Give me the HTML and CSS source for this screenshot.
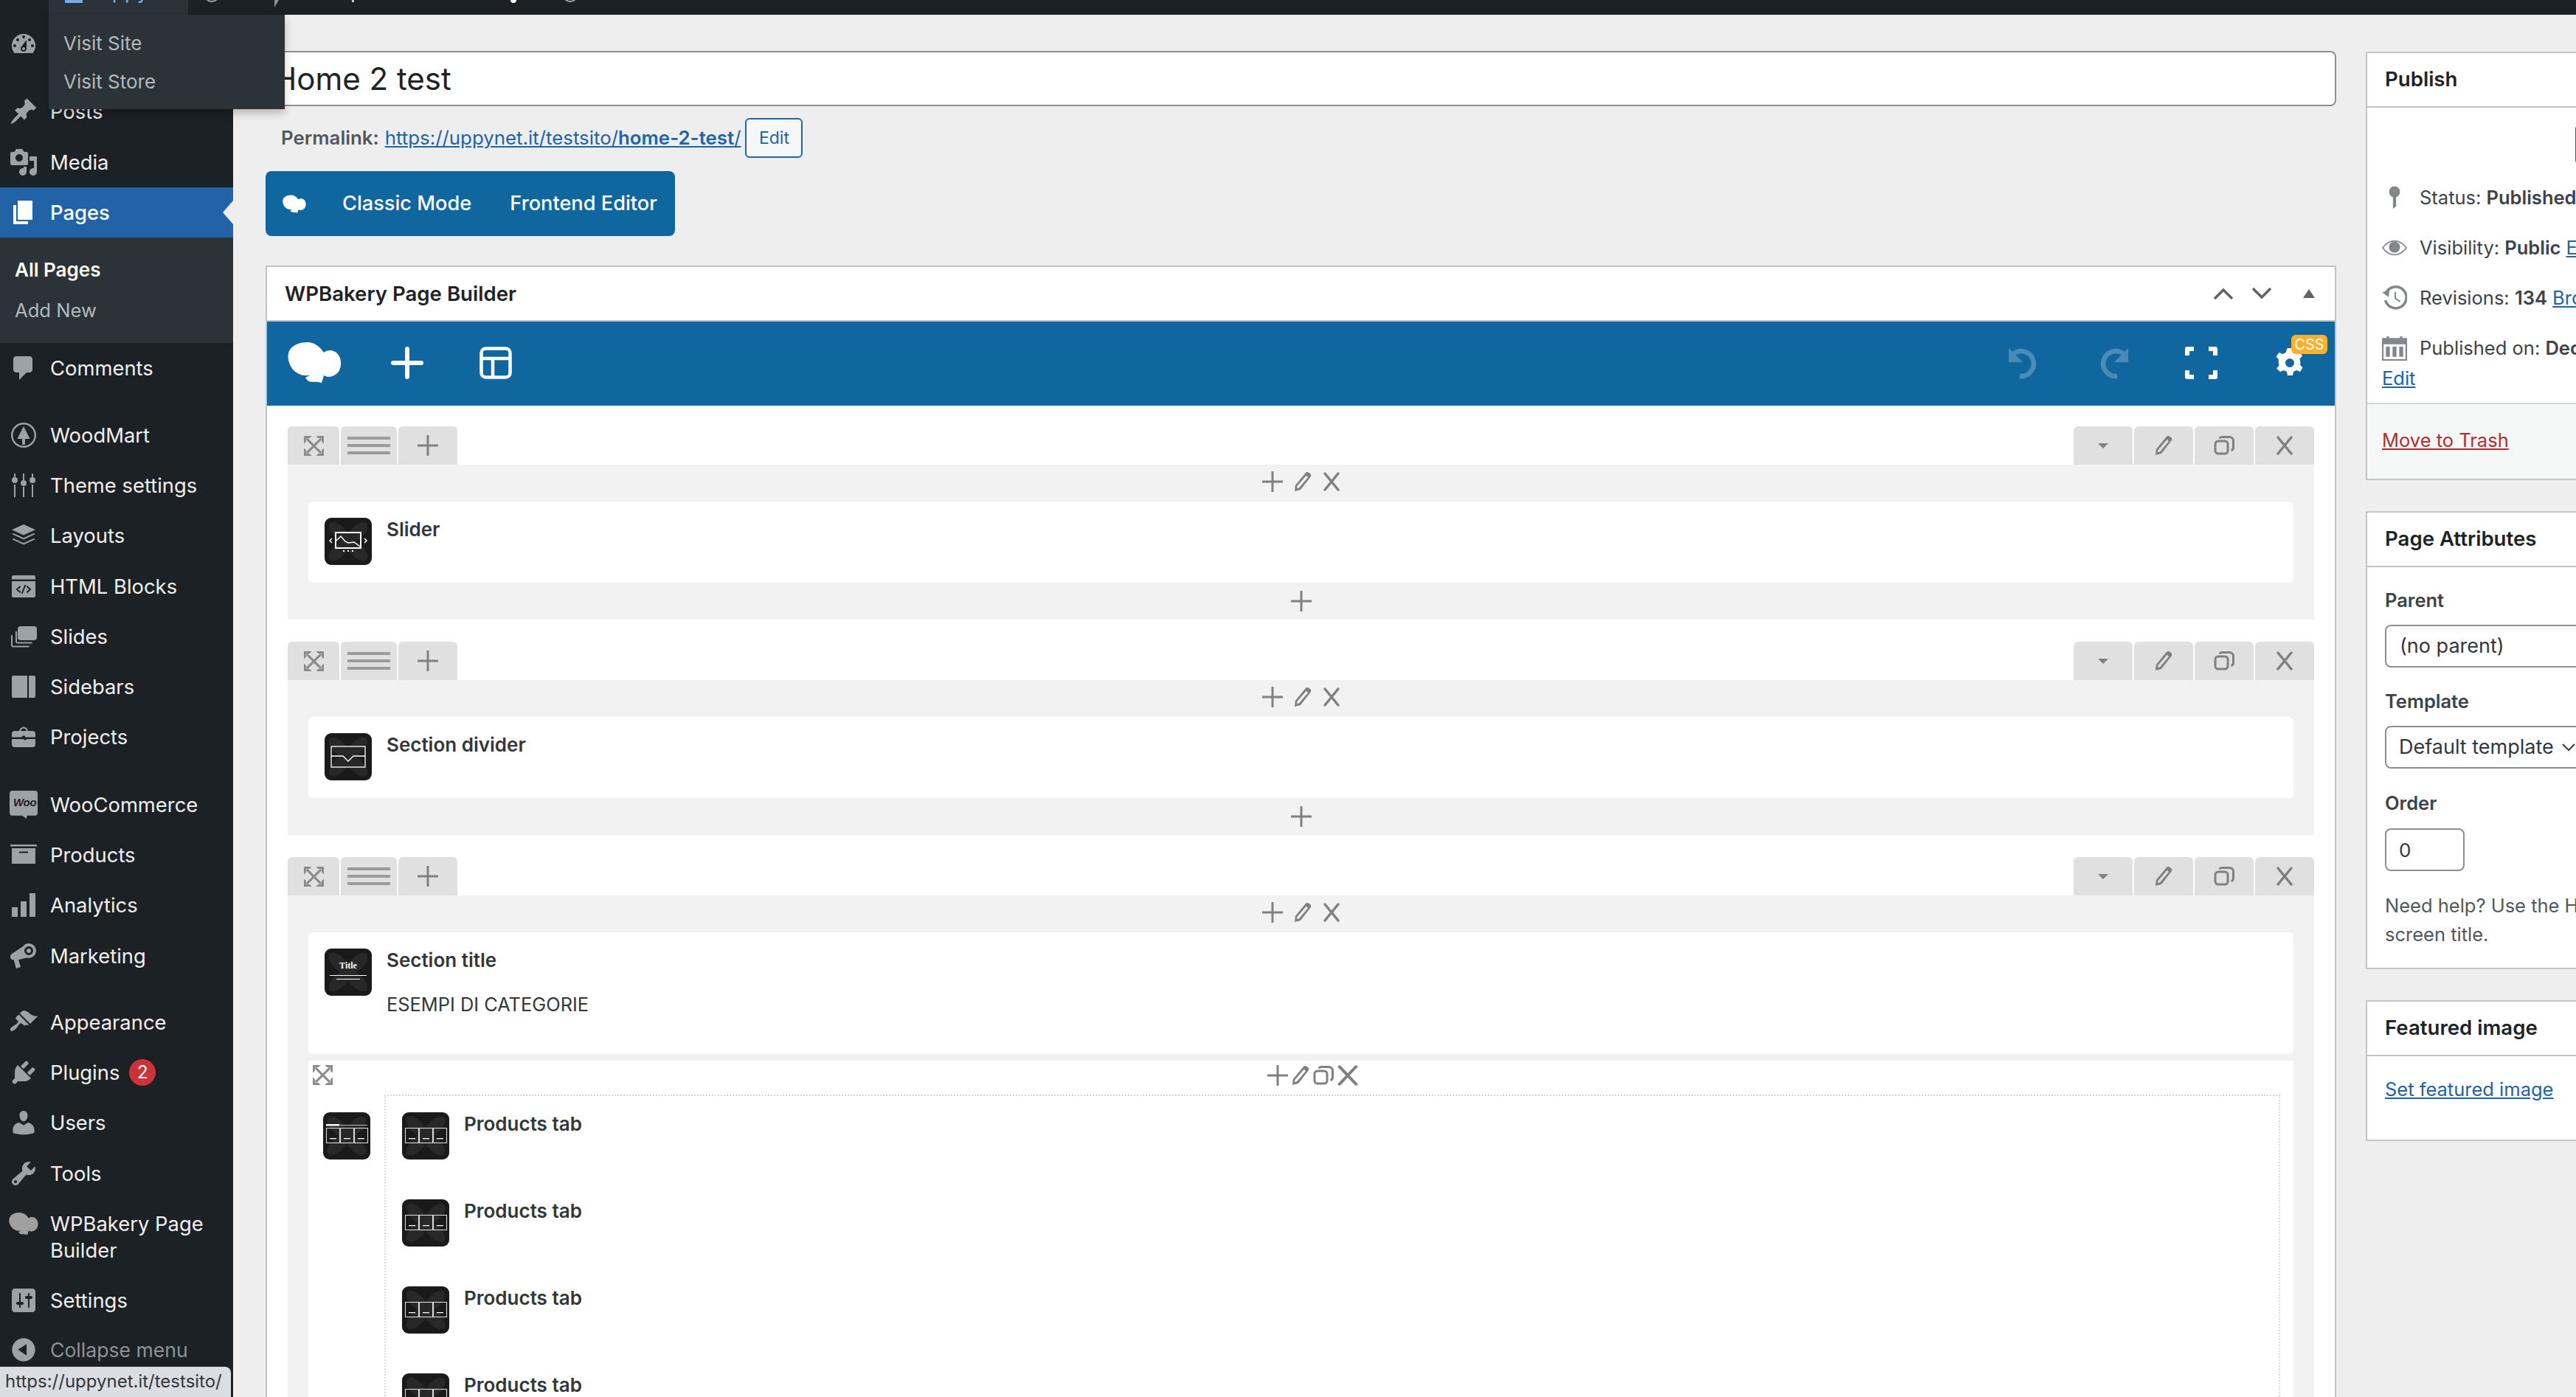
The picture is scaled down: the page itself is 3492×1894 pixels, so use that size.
FILE: index.html
```html
<!DOCTYPE html>
<html lang="en">
<head>
<meta charset="utf-8">
<title>Edit Page</title>
<link rel="stylesheet" href="styles.css">
</head>
<body>
<svg class="defs" aria-hidden="true">
  <symbol id="i-dashboard" viewBox="0 0 20 20"><path fill-rule="evenodd" d="M3.76 16h12.48c1.1-1.37 1.76-3.11 1.76-5 0-4.42-3.58-8-8-8s-8 3.58-8 8c0 1.89.66 3.63 1.76 5zM10 4c.55 0 1 .45 1 1s-.45 1-1 1-1-.45-1-1 .45-1 1-1zM6 6c.55 0 1 .45 1 1s-.45 1-1 1-1-.45-1-1 .45-1 1-1zm8 0c.55 0 1 .45 1 1s-.45 1-1 1-1-.45-1-1 .45-1 1-1zm-5.37 5.55L12 7v6c0 1.1-.9 2-2 2s-2-.9-2-2c0-.57.24-1.08.63-1.45zM4 10c.55 0 1 .45 1 1s-.45 1-1 1-1-.45-1-1 .45-1 1-1zm12 0c.55 0 1 .45 1 1s-.45 1-1 1-1-.45-1-1 .45-1 1-1zm-5 3c0-.55-.45-1-1-1s-1 .45-1 1 .45 1 1 1 1-.45 1-1z"/></symbol>
  <symbol id="i-post" viewBox="0 0 20 20"><path d="M10.44 3.02l1.82-1.82 6.36 6.35-1.83 1.82c-1.05-.68-2.48-.57-3.41.36l-.75.75c-.92.93-1.04 2.35-.35 3.41l-1.83 1.82-2.41-2.41-2.8 2.79c-.42.42-3.38 2.71-3.8 2.29s1.86-3.39 2.28-3.81l2.79-2.79L4.1 9.36l1.83-1.82c1.05.69 2.48.57 3.4-.36l.75-.75c.93-.92 1.05-2.35.36-3.41z"/></symbol>
  <symbol id="i-media" viewBox="0 0 20 20"><path fill-rule="evenodd" d="M13 11V4c0-.55-.45-1-1-1h-1.67L9 1H5L3.67 3H2c-.55 0-1 .45-1 1v7c0 .55.45 1 1 1h10c.55 0 1-.45 1-1zM7 4.500c1.380 0 2.500 1.120 2.500 2.500S8.380 9.500 7 9.500 4.500 8.380 4.500 7 5.620 4.500 7 4.500zM14 6h5v10.500c0 1.380-1.120 2.500-2.500 2.500S14 17.880 14 16.500s1.120-2.500 2.500-2.500c.17 0 .34.02.5.05V9h-3V6zm-4 8.050V13h2v3.500c0 1.380-1.120 2.500-2.500 2.500S7 17.880 7 16.500 8.120 14 9.500 14c.17 0 .34.02.5.05z"/></symbol>
  <symbol id="i-page" viewBox="0 0 20 20"><path d="M6 15V2h10v13H6zm-1 1h8v2H3V5h2v11z"/></symbol>
  <symbol id="i-comments" viewBox="0 0 20 20"><path d="M5 2h9c1.100 0 2 .9 2 2v7c0 1.100-.9 2-2 2h-2l-5 5v-5H5c-1.100 0-2-.9-2-2V4c0-1.100.9-2 2-2z"/></symbol>
  <symbol id="i-wood" viewBox="0 0 20 20"><path fill-rule="evenodd" d="M10 1.500a8.500 8.500 0 1 1 0 17 8.500 8.500 0 0 1 0-17zm0 1.200a7.300 7.300 0 1 0 0 14.600 7.300 7.300 0 0 0 0-14.600z"/><path d="M10 4l4.300 8.500H11v4H9v-4H5.700z"/></symbol>
  <symbol id="i-sliders" viewBox="0 0 20 20"><path d="M3.500 9.500h1V18h-1zM3.500 2h1v3h-1zM9.500 11h1v7h-1zM9.500 2h1v4.500h-1zM15.500 9.500h1V18h-1zM15.500 2h1v3h-1z"/><circle cx="4" cy="6.500" r="2"/><circle cx="10" cy="8.500" r="2"/><circle cx="16" cy="6.500" r="2"/></symbol>
  <symbol id="i-layers" viewBox="0 0 20 20"><path d="M10 2.500l8 3.600-8 3.600-8-3.600z"/><path d="M2 9l1.200-.5L10 11.600l6.800-3.100L18 9l-8 3.700zM2 12.500l1.200-.5L10 15.100l6.800-3.100 1.200.5-8 3.700z"/></symbol>
  <symbol id="i-html" viewBox="0 0 20 20"><path fill-rule="evenodd" d="M3 2.500h14a1 1 0 0 1 1 1v1.800H2V3.500a1 1 0 0 1 1-1zM2 6.500h16V16.500a1 1 0 0 1-1 1H3a1 1 0 0 1-1-1zm5.500 3L4.800 12l2.700 2.500.7-.7L6.200 12l2-1.800zm5 0l-.7.7 2 1.800-2 1.800.7.7 2.700-2.500zM10.700 9l-2.400 6h1l2.400-6z"/></symbol>
  <symbol id="i-slides" viewBox="0 0 20 20"><rect x="6" y="3" width="13" height="9.500" rx="2"/><path d="M4.500 6.500h1v7.200h10.300v1H6a1.500 1.500 0 0 1-1.500-1.500zM1.500 9h1v7.200h11.300v1H3A1.500 1.500 0 0 1 1.500 15.700z"/></symbol>
  <symbol id="i-sidebars" viewBox="0 0 20 20"><path d="M3 2.500h9.500v15H3a1 1 0 0 1-1-1v-13a1 1 0 0 1 1-1zM13.500 2.500H17a1 1 0 0 1 1 1v13a1 1 0 0 1-1 1h-3.500z"/></symbol>
  <symbol id="i-projects" viewBox="0 0 20 20"><path fill-rule="evenodd" d="M2 8a2 2 0 0 1 2-2h3c.4-1.700 1.600-2.800 3-2.800S12.600 4.300 13 6h3a2 2 0 0 1 2 2v2.300h-6.800a1.200 1.200 0 0 0-2.400 0H2zm6.100-2h3.800c-.3-1-1-1.700-1.900-1.700S8.400 5 8.100 6z"/><path d="M2 11.500h7.900a1.200 1.200 0 0 0 2.200 0H18V15a2 2 0 0 1-2 2H4a2 2 0 0 1-2-2z"/></symbol>
  <symbol id="i-products" viewBox="0 0 20 20"><path fill-rule="evenodd" d="M1 3h18v1.300H1zM2 5.500h16V16H2zM7 7.800v1h6v-1z"/></symbol>
  <symbol id="i-analytics" viewBox="0 0 20 20"><path d="M2 11.500h4V18H2zM8 7.500h4V18H8zM14 2h4v16h-4z"/></symbol>
  <symbol id="i-marketing" viewBox="0 0 20 20"><path fill-rule="evenodd" d="M13.500 1.500a5 5 0 0 1 0 10c-.5 0-1 0-1.500-.2L6.500 12.600 8 17.500l-3 1-1.700-5.900C2 12.700 1 12 1 10.600c0-1.200.7-2 1.700-2.500l6.900-4.600a5 5 0 0 1 3.900-2zm0 2a3 3 0 1 0 0 6 3 3 0 0 0 0-6zm0 1.500a1.500 1.500 0 1 1 0 3 1.500 1.500 0 0 1 0-3z"/></symbol>
  <symbol id="i-appearance" viewBox="0 0 20 20"><path d="M14.480 11.060L7.410 3.990l1.500-1.500c.5-.56 2.300-.47 3.510.32 1.210.8 1.430 1.280 2.910 2.100 1.180.64 2.450 1.260 4.450.85zm-.71.71L6.700 4.700 4.930 6.470c-.39.39-.39 1.020 0 1.410l1.060 1.060c.39.39.39 1.030 0 1.420-.6.6-1.430 1.110-2.210 1.690-.35.26-.7.53-1.010.84C1.430 13.230.4 14.840 1.210 15.650c.8.8 2.420-.23 3.760-1.560.31-.31.58-.66.85-1.020.57-.78 1.080-1.610 1.690-2.210.39-.39 1.020-.39 1.410 0l1.060 1.060c.39.39 1.020.39 1.410 0z"/></symbol>
  <symbol id="i-plugins" viewBox="0 0 20 20"><path d="M13.110 4.360L9.870 7.600 8 5.730l3.240-3.240c.35-.34 1.050-.2 1.560.32.52.51.66 1.210.31 1.550zm-8 1.770l.91-1.120 9.010 9.010-1.190.84c-.71.71-2.630 1.160-3.820 1.160H6.140L4.900 17.260c-.59.59-1.540.59-2.120 0-.59-.58-.59-1.530 0-2.120l1.240-1.240v-3.880c0-1.130.4-3.190 1.090-3.890zm7.260 3.970l3.240-3.240c.34-.35 1.040-.21 1.550.31.52.51.66 1.210.31 1.550l-3.240 3.250z"/></symbol>
  <symbol id="i-users" viewBox="0 0 20 20"><path d="M10 9.250c-2.270 0-2.730-3.440-2.730-3.440C7 4.020 7.820 2 9.970 2c2.160 0 2.980 2.020 2.710 3.810 0 0-.41 3.440-2.680 3.440zm0 2.570L12.720 10c2.390 0 4.520 2.330 4.520 4.530v2.490s-3.650 1.130-7.240 1.130c-3.650 0-7.240-1.130-7.240-1.130v-2.490c0-2.250 1.940-4.480 4.470-4.480z"/></symbol>
  <symbol id="i-tools" viewBox="0 0 20 20"><path fill-rule="evenodd" d="M16.680 9.770c-1.340 1.340-3.300 1.670-4.950.99l-5.410 6.520c-.99.99-2.590.99-3.580 0s-.99-2.59 0-3.570l6.520-5.420c-.68-1.650-.35-3.610.99-4.950 1.280-1.280 3.120-1.620 4.720-1.060l-2.890 2.890 2.820 2.820 2.860-2.870c.53 1.580.18 3.390-1.080 4.650zM3.810 16.210c.4.390 1.040.39 1.430 0 .4-.4.4-1.040 0-1.430-.39-.4-1.030-.4-1.430 0-.39.39-.39 1.030 0 1.430z"/></symbol>
  <symbol id="i-settings" viewBox="0 0 20 20"><path fill-rule="evenodd" d="M18 16V4c0-1.100-.9-2-2-2H4c-1.100 0-2 .9-2 2v12c0 1.100.9 2 2 2h12c1.100 0 2-.9 2-2zM8 11h1c.55 0 1 .45 1 1s-.45 1-1 1H8v1.500c0 .28-.22.5-.5.5s-.5-.22-.5-.5V13H6c-.55 0-1-.45-1-1s.45-1 1-1h1V5.500c0-.28.22-.5.5-.5s.5.22.5.5V11zm5-2h-1c-.55 0-1-.45-1-1s.45-1 1-1h1V5.500c0-.28.22-.5.5-.5s.5.22.5.5V7h1c.55 0 1 .45 1 1s-.45 1-1 1h-1v5.500c0 .28-.22.5-.5.5s-.5-.22-.5-.5V9z"/></symbol>
  <symbol id="i-collapse" viewBox="0 0 20 20"><path fill-rule="evenodd" d="M10 2.160c4.330 0 7.840 3.510 7.840 7.840s-3.510 7.840-7.840 7.840S2.160 14.330 2.160 10 5.710 2.160 10 2.160zm2 11.720V6.120L6.180 9.880z"/></symbol>
  <symbol id="i-woo" viewBox="0 0 40 36" preserveAspectRatio="none"><path d="M4 0h32a4 4 0 0 1 4 4v24a4 4 0 0 1-4 4H25l-1 4-6-4H4a4 4 0 0 1-4-4V4a4 4 0 0 1 4-4z"/></symbol>
  <symbol id="i-bakery" viewBox="0 0 73 55"><path d="M26 0C38 0 45 8 49 14 53 10 62 10 67 15c6 6 7 17 2 25-5 6-13 9-20 5l-3 10c-6-2-14 0-19-3l-3-4 7-4C26 46 16 46 8 38 1 30-2 18 3 10 8 3 17 0 26 0z"/></symbol>
  <symbol id="i-expand" viewBox="0 0 28 28"><g fill="none" stroke="currentColor" stroke-width="3"><path d="M4 4l20 20M24 4L4 24"/></g><path d="M0 0h11L8 3H3v5l-3 3zM28 0H17l3 3h5v5l3 3zM0 28h11l-3-3H3v-5l-3-3zM28 28H17l3-3h5v-5l3-3z"/></symbol>
  <symbol id="i-plus" viewBox="0 0 28 28"><path d="M12.500 0h3v12.500H28v3H15.500V28h-3V15.500H0v-3h12.500z"/></symbol>
  <symbol id="i-pencil" viewBox="0 0 26 26"><path fill-rule="evenodd" d="M18.500 0c1.500-.2 4 1.200 5 2.500 1 1.300 1 2.500.3 3.700L10 24l-8 2 .8-8L16.500 1.500c.5-.8 1.200-1.400 2-1.500zm-1 5L5.500 19l-.5 3 3-.8L20 7c-.5-.8-1.500-1.600-2.500-2z"/></symbol>
  <symbol id="i-copy" viewBox="0 0 28 26"><g fill="none" stroke="currentColor" stroke-width="3"><rect x="2" y="7" width="17" height="17" rx="4"/><path d="M8 3.500c.5-1.300 1.500-2 3-2h10c3 0 5.500 2 5.500 5v9c0 2-.8 3.500-3 4"/></g></symbol>
  <symbol id="i-close" viewBox="0 0 24 26" preserveAspectRatio="none"><path d="M3 2l18 22M21 2L3 24" fill="none" stroke="currentColor" stroke-width="3.500" stroke-linecap="round"/></symbol>
  <symbol id="el-bg" viewBox="0 0 64 64"><rect width="64" height="64" rx="9" fill="#1a1a1a"/><g fill="#282828"><ellipse cx="20" cy="20" rx="18" ry="9" transform="rotate(45 20 20)"/><ellipse cx="44" cy="20" rx="18" ry="9" transform="rotate(-45 44 20)"/><ellipse cx="20" cy="44" rx="18" ry="9" transform="rotate(-45 20 44)"/><ellipse cx="44" cy="44" rx="18" ry="9" transform="rotate(45 44 44)"/></g></symbol>
  <symbol id="gl-slider" viewBox="0 0 64 64"><g fill="none" stroke="#fff"><rect x="15" y="20" width="34" height="21" stroke-width="2"/><path d="M16 31l6-6 6 7 4 2 8-1 8 6" stroke-width="1.500"/><path d="M10 28l-3 3 3 3M54 28l3 3-3 3" stroke-width="1.500"/></g><path fill="#fff" d="M25 44h2v2h-2zM31 44h2v2h-2zM37 44h2v2h-2z"/></symbol>
  <symbol id="gl-divider" viewBox="0 0 64 64"><g fill="none" stroke="#fff" stroke-width="1.300"><rect x="9" y="18" width="46" height="28"/><path d="M9 31h16l7 7 7-7h16"/></g></symbol>
  <symbol id="gl-tabs" viewBox="0 0 64 64"><g fill="none" stroke="#d8d8d8" stroke-width="1.100"><rect x="4.500" y="21.500" width="18" height="20"/><rect x="23.500" y="21.500" width="18" height="20"/><rect x="42.500" y="21.500" width="18" height="20"/></g><path fill="#fff" d="M9 35h9v1.300H9zM28 35h9v1.300h-9zM47 35h9v1.300h-9z"/></symbol>
  <symbol id="gl-tabset" viewBox="0 0 64 64"><path fill="#fff" d="M4 16h18v2.500H4z"/><path fill="#bbb" d="M22 17h38v1H22z"/><g fill="none" stroke="#d8d8d8" stroke-width="1.100"><rect x="4.500" y="21.500" width="18" height="20"/><rect x="23.500" y="21.500" width="18" height="20"/><rect x="42.500" y="21.500" width="18" height="20"/></g><path fill="#fff" d="M9 35h9v1.300H9zM28 35h9v1.300h-9zM47 35h9v1.300h-9z"/></symbol>
</svg>

<header class="adminbar">
  <svg class="bar-wp"><use href="#i-wood"/></svg>
  <div class="bar-site">
    <span class="bar-home"></span>
    <span class="bar-name">Uppy</span>
  </div>
  <span class="bar-arc"></span>
  <span class="bar-wedge"></span>
  <span class="bar-stem"></span>
  <span class="bar-dot"></span>
  <span class="bar-arc bar-arc-last"></span>
</header>

<div class="flyout">
  <a class="flyout-link">Visit Site</a>
  <a class="flyout-link">Visit Store</a>
</div>

<div class="layout">
  <nav class="sidebar">
    <a class="menu-item" aria-label="Dashboard"><svg class="menu-ico"><use href="#i-dashboard"/></svg></a>
    <a class="menu-item sep"><svg class="menu-ico"><use href="#i-post"/></svg><span>Posts</span></a>
    <a class="menu-item"><svg class="menu-ico"><use href="#i-media"/></svg><span>Media</span></a>
    <a class="menu-item current"><svg class="menu-ico"><use href="#i-page"/></svg><span>Pages</span></a>
    <div class="submenu">
      <a class="sub-item sub-active">All Pages</a>
      <a class="sub-item">Add New</a>
    </div>
    <a class="menu-item"><svg class="menu-ico"><use href="#i-comments"/></svg><span>Comments</span></a>
    <a class="menu-item sep-s"><svg class="menu-ico"><use href="#i-wood"/></svg><span>WoodMart</span></a>
    <a class="menu-item"><svg class="menu-ico"><use href="#i-sliders"/></svg><span>Theme settings</span></a>
    <a class="menu-item"><svg class="menu-ico"><use href="#i-layers"/></svg><span>Layouts</span></a>
    <a class="menu-item"><svg class="menu-ico"><use href="#i-html"/></svg><span>HTML Blocks</span></a>
    <a class="menu-item"><svg class="menu-ico"><use href="#i-slides"/></svg><span>Slides</span></a>
    <a class="menu-item"><svg class="menu-ico"><use href="#i-sidebars"/></svg><span>Sidebars</span></a>
    <a class="menu-item"><svg class="menu-ico"><use href="#i-projects"/></svg><span>Projects</span></a>
    <a class="menu-item sep-m"><span class="woo-ico"><svg class="woo-bg"><use href="#i-woo"/></svg><span class="woo-text">Woo</span></span><span>WooCommerce</span></a>
    <a class="menu-item"><svg class="menu-ico"><use href="#i-products"/></svg><span>Products</span></a>
    <a class="menu-item"><svg class="menu-ico"><use href="#i-analytics"/></svg><span>Analytics</span></a>
    <a class="menu-item"><svg class="menu-ico"><use href="#i-marketing"/></svg><span>Marketing</span></a>
    <a class="menu-item sep-s"><svg class="menu-ico"><use href="#i-appearance"/></svg><span>Appearance</span></a>
    <a class="menu-item"><svg class="menu-ico"><use href="#i-plugins"/></svg><span>Plugins</span><span class="badge">2</span></a>
    <a class="menu-item"><svg class="menu-ico"><use href="#i-users"/></svg><span>Users</span></a>
    <a class="menu-item"><svg class="menu-ico"><use href="#i-tools"/></svg><span>Tools</span></a>
    <a class="menu-item tall"><svg class="menu-ico"><use href="#i-bakery"/></svg><span>WPBakery Page Builder</span></a>
    <a class="menu-item"><svg class="menu-ico"><use href="#i-settings"/></svg><span>Settings</span></a>
    <a class="menu-item collapse"><svg class="menu-ico"><use href="#i-collapse"/></svg><span>Collapse menu</span></a>
  </nav>

  <main class="content">
    <div class="main-col">
      <input class="title-input" type="text" value="Home 2 test">
      <div class="permalink">
        <strong class="perma-label">Permalink:</strong>
        <a class="link perma-link">https://uppynet.it/testsito/<strong>home-2-test</strong>/</a>
        <span class="edit-btn">Edit</span>
      </div>
      <div class="mode-bar">
        <svg class="mode-logo"><use href="#i-bakery"/></svg>
        <span class="mode-btn mode-classic">Classic Mode</span>
        <span class="mode-btn">Frontend Editor</span>
      </div>

      <section class="pb-box">
        <div class="pb-head">
          <h2 class="pb-title">WPBakery Page Builder</h2>
          <svg class="pb-chev" viewBox="0 0 28 16"><path d="M2 15l12-12 12 12" fill="none" stroke="#5f6368" stroke-width="3.500"/></svg>
          <svg class="pb-chev pb-chev-down" viewBox="0 0 28 16"><path d="M2 1l12 12 12-12" fill="none" stroke="#5f6368" stroke-width="3.500"/></svg>
          <span class="pb-tri"></span>
        </div>
        <div class="pb-toolbar">
          <svg class="tb-logo"><use href="#i-bakery"/></svg>
          <svg class="tb-plus" viewBox="0 0 44 44"><path d="M22 3v38M3 22h38" fill="none" stroke="#fff" stroke-width="6" stroke-linecap="round"/></svg>
          <svg class="tb-layout" viewBox="0 0 44 44"><g fill="none" stroke="#fff" stroke-width="4.500"><rect x="2.500" y="2.500" width="39" height="39" rx="6"/><path d="M2 16h40M18 16v26"/></g></svg>
          <span class="tb-spacer"></span>
          <svg class="tb-undo" viewBox="0 0 44 44"><g fill="none" stroke="#4a8cb8" stroke-width="6.500"><path d="M7 10a17 17 0 1 1 9 30"/></g><path fill="#4a8cb8" d="M1 2v19h19z"/></svg>
          <svg class="tb-redo" viewBox="0 0 44 44"><g fill="none" stroke="#4a8cb8" stroke-width="6.500"><path d="M37 10a17 17 0 1 0-9 30"/></g><path fill="#4a8cb8" d="M43 2v19H24z"/></svg>
          <svg class="tb-full" viewBox="0 0 44 44"><g fill="none" stroke="#fff" stroke-width="6" stroke-linejoin="round"><path d="M3 12V3h9M32 3h9v9M41 32v9h-9M12 41H3v-9"/></g></svg>
          <span class="tb-gear-wrap">
            <svg class="tb-gear" viewBox="0 0 40 40"><path fill="#fff" fill-rule="evenodd" d="M16.500 0h7l1 5 4 2 5-2 3.500 5.500-3.500 4 .5 2.500.5 3-.5 2.500 3.500 4-3.500 5.500-5-2-4 2-1 5h-7l-1-5-4-2-5 2L2 27.500l3.500-4-.5-2.500-.5-3 .5-2.500-3.500-4L5.500 6l5 2 4-2zM20 14a6 6 0 1 0 0 12 6 6 0 0 0 0-12z"/></svg>
            <span class="css-badge">CSS</span>
          </span>
        </div>

        <div class="pb-rows">
          <section class="row">
            <div class="row-bar">
              <div class="tabs">
                <span class="tab tab-exp"><svg class="ic-exp"><use href="#i-expand"/></svg></span>
                <span class="tab tab-burger"><span class="burger"></span></span>
                <span class="tab tab-add"><svg class="ic-add"><use href="#i-plus"/></svg></span>
              </div>
              <div class="tabs">
                <span class="tab tab-r"><span class="mini-tri"></span></span>
                <span class="tab tab-r"><svg class="ic-edit"><use href="#i-pencil"/></svg></span>
                <span class="tab tab-r"><svg class="ic-copy"><use href="#i-copy"/></svg></span>
                <span class="tab tab-r"><svg class="ic-x"><use href="#i-close"/></svg></span>
              </div>
            </div>
            <div class="row-body">
              <div class="controls"><svg class="ic-add"><use href="#i-plus"/></svg><svg class="ic-edit"><use href="#i-pencil"/></svg><svg class="ic-x"><use href="#i-close"/></svg></div>
              <div class="element">
                <svg class="el-icon"><use href="#el-bg"/><use href="#gl-slider"/></svg>
                <div class="el-text"><div class="el-name">Slider</div></div>
              </div>
              <div class="row-foot"><svg class="ic-add"><use href="#i-plus"/></svg></div>
            </div>
          </section>

          <section class="row">
            <div class="row-bar">
              <div class="tabs">
                <span class="tab tab-exp"><svg class="ic-exp"><use href="#i-expand"/></svg></span>
                <span class="tab tab-burger"><span class="burger"></span></span>
                <span class="tab tab-add"><svg class="ic-add"><use href="#i-plus"/></svg></span>
              </div>
              <div class="tabs">
                <span class="tab tab-r"><span class="mini-tri"></span></span>
                <span class="tab tab-r"><svg class="ic-edit"><use href="#i-pencil"/></svg></span>
                <span class="tab tab-r"><svg class="ic-copy"><use href="#i-copy"/></svg></span>
                <span class="tab tab-r"><svg class="ic-x"><use href="#i-close"/></svg></span>
              </div>
            </div>
            <div class="row-body">
              <div class="controls"><svg class="ic-add"><use href="#i-plus"/></svg><svg class="ic-edit"><use href="#i-pencil"/></svg><svg class="ic-x"><use href="#i-close"/></svg></div>
              <div class="element">
                <svg class="el-icon"><use href="#el-bg"/><use href="#gl-divider"/></svg>
                <div class="el-text"><div class="el-name">Section divider</div></div>
              </div>
              <div class="row-foot"><svg class="ic-add"><use href="#i-plus"/></svg></div>
            </div>
          </section>

          <section class="row">
            <div class="row-bar">
              <div class="tabs">
                <span class="tab tab-exp"><svg class="ic-exp"><use href="#i-expand"/></svg></span>
                <span class="tab tab-burger"><span class="burger"></span></span>
                <span class="tab tab-add"><svg class="ic-add"><use href="#i-plus"/></svg></span>
              </div>
              <div class="tabs">
                <span class="tab tab-r"><span class="mini-tri"></span></span>
                <span class="tab tab-r"><svg class="ic-edit"><use href="#i-pencil"/></svg></span>
                <span class="tab tab-r"><svg class="ic-copy"><use href="#i-copy"/></svg></span>
                <span class="tab tab-r"><svg class="ic-x"><use href="#i-close"/></svg></span>
              </div>
            </div>
            <div class="row-body">
              <div class="controls"><svg class="ic-add"><use href="#i-plus"/></svg><svg class="ic-edit"><use href="#i-pencil"/></svg><svg class="ic-x"><use href="#i-close"/></svg></div>
              <div class="element">
                <svg class="el-icon" viewBox="0 0 64 64"><use href="#el-bg"/><text class="el-glyph-text" x="32" y="27" text-anchor="middle">Title</text><path fill="#fff" d="M7 36h50v1H7zM16 41h32v1H16z"/></svg>
                <div class="el-text"><div class="el-name">Section title</div><div class="el-desc">ESEMPI DI CATEGORIE</div></div>
              </div>
              <div class="tabs-el">
                <div class="tabs-el-head">
                  <svg class="ic-exp"><use href="#i-expand"/></svg>
                  <div class="controls controls-in"><svg class="ic-add"><use href="#i-plus"/></svg><svg class="ic-edit"><use href="#i-pencil"/></svg><svg class="ic-copy"><use href="#i-copy"/></svg><svg class="ic-x"><use href="#i-close"/></svg></div>
                </div>
                <div class="tabs-el-body">
                  <svg class="el-icon tabs-el-icon"><use href="#el-bg"/><use href="#gl-tabset"/></svg>
                  <div class="tabs-list">
                    <div class="tab-item"><svg class="el-icon"><use href="#el-bg"/><use href="#gl-tabs"/></svg><div class="el-name">Products tab</div></div>
                    <div class="tab-item"><svg class="el-icon"><use href="#el-bg"/><use href="#gl-tabs"/></svg><div class="el-name">Products tab</div></div>
                    <div class="tab-item"><svg class="el-icon"><use href="#el-bg"/><use href="#gl-tabs"/></svg><div class="el-name">Products tab</div></div>
                    <div class="tab-item"><svg class="el-icon"><use href="#el-bg"/><use href="#gl-tabs"/></svg><div class="el-name">Products tab</div></div>
                  </div>
                </div>
              </div>
            </div>
          </section>
        </div>
      </section>
    </div>

    <aside class="side-col">
      <section class="postbox">
        <h2 class="box-title">Publish</h2>
        <div class="pub-actions"><span class="preview-btn">Preview Changes</span></div>
        <div class="misc-item"><svg class="misc-ico" viewBox="0 0 32 32"><circle cx="16" cy="8.500" r="7"/><path d="M14 12h4v15l-4 3z"/></svg><span>Status: <b>Published</b> <a class="link">Edit</a></span></div>
        <div class="misc-item"><svg class="misc-ico misc-eye" viewBox="0 0 36 22"><path fill="none" stroke="#82878c" stroke-width="1.800" d="M1 11C6 4 12 1 18 1s12 3 17 10c-5 7-11 10-17 10S6 18 1 11z"/><circle cx="18" cy="10" r="8"/></svg><span>Visibility: <b>Public</b> <a class="link">Edit</a></span></div>
        <div class="misc-item"><svg class="misc-ico" viewBox="0 0 34 32"><path fill="none" stroke="#82878c" stroke-width="3.500" d="M6 8a14.500 14.500 0 1 1-1.500 11"/><path d="M0 8l10-2-1 9zM17 8h2v8l6 4-1 2-7-5z"/></svg><span>Revisions: <b>134</b> <a class="link">Browse</a></span></div>
        <div class="misc-item"><svg class="misc-ico" viewBox="0 0 32 32"><path fill-rule="evenodd" d="M0 3h6V1h3v2h14V1h3v2h6v29H0zM2 11v19h28V11zM5 14h5v13H5zM13.500 14h5v13h-5zM22 14h5v13h-5z"/></svg><span>Published on: <b>Dec 15, 2022 at 14:20</b></span></div>
        <a class="link misc-edit">Edit</a>
        <div class="box-foot"><a class="trash">Move to Trash</a></div>
      </section>

      <section class="postbox">
        <h2 class="box-title">Page Attributes</h2>
        <div class="attr-body">
          <div class="attr-label attr-first">Parent</div>
          <div class="select select-wide">(no parent)</div>
          <div class="attr-label">Template</div>
          <div class="select">Default template<svg class="select-chev" viewBox="0 0 20 12"><path d="M2 2l8 8 8-8" fill="none" stroke="#32373c" stroke-width="2"/></svg></div>
          <div class="attr-label attr-order">Order</div>
          <input class="order-input" type="text" value="0">
          <p class="attr-help">Need help? Use the Help tab above the screen title.</p>
        </div>
      </section>

      <section class="postbox">
        <h2 class="box-title">Featured image</h2>
        <div class="feat-body"><a class="link">Set featured image</a></div>
      </section>
    </aside>
  </main>
</div>

<div class="statusbar">https://uppynet.it/testsito/</div>
</body>
</html>
```
FILE: styles.css
```css
* { box-sizing: border-box; }
html, body { margin: 0; width: 3492px; height: 1894px; overflow: hidden; }
body {
  position: relative;
  background: #eeeeee;
  color: #32373c;
  font-family: Inter, "Liberation Sans", sans-serif;
  font-size: 25.5px;
  line-height: 36px;
}
.defs { position: absolute; width: 0; height: 0; }
a { text-decoration: none; }
b, strong { font-weight: 600; }
h2 { margin: 0; }

/* admin bar */
.adminbar { display: flex; height: 20px; background: #1c2125; overflow: hidden; }
.bar-wp { width: 40px; height: 40px; margin: -37px 0 0 10px; fill: #a0a5aa; flex: none; }
.bar-site { display: flex; width: 189px; margin-left: 16px; height: 20px; background: #2c3338; flex: none; }
.bar-home { width: 24px; height: 4px; margin-left: 22px; background: #72aee6; }
.bar-name { margin: -30px 0 0 19px; color: #72aee6; font-size: 28px; height: 36px; }
.bar-arc { width: 22px; height: 22px; margin: -19px 0 0 21px; border: 2px solid #a0a5aa; border-radius: 50%; flex: none; }
.bar-wedge { width: 6px; height: 10px; margin: 0 0 0 74px; background: #8a8f94; clip-path: polygon(0 0, 100% 0, 0 100%); flex: none; }
.bar-stem { width: 3px; height: 3px; margin-left: 99px; background: #c4c7ca; flex: none; }
.bar-dot { width: 8px; height: 8px; margin: -4px 0 0 212px; background: #fff; border-radius: 50%; flex: none; }
.bar-arc-last { margin-left: 62px; }

/* flyout over the menu */
.flyout {
  position: absolute; left: 66px; top: 20px; z-index: 5;
  width: 320px; height: 128px; padding-top: 13px;
  background: #2c3338;
  box-shadow: 0 6px 10px rgba(0, 0, 0, .22);
}
.flyout-link { display: block; height: 52px; padding-left: 20px; color: #b3b8bd; font-size: 26px; line-height: 52px; }

/* layout */
.layout { display: flex; height: 1874px; }
.sidebar { flex: none; width: 316px; padding-top: 6px; background: #1c2125; overflow: hidden; }
.menu-item { position: relative; display: flex; align-items: center; height: 68.3px; padding-left: 12px; color: #f0f0f1; font-size: 27.4px; line-height: 36px; }
.menu-ico { flex: none; width: 40px; height: 40px; margin-right: 16px; fill: #9ca2a7; }
.sep { margin-top: 23px; }
.sep-m { margin-top: 23px; }
.sep-s { margin-top: 22px; }
.tall { height: 104px; align-items: flex-start; padding-top: 16px; }
.tall .menu-ico { height: 36px; fill: #a0a0a0; }
.collapse { margin-top: -1px; color: #8d9297; font-size: 26.6px; }
.current { background: #2163a6; color: #fff; font-weight: 500; }
.current .menu-ico { fill: #fff; }
.current::after {
  content: ""; position: absolute; right: 0; top: 18px;
  border-style: solid; border-width: 16px 14px 16px 0;
  border-color: transparent #eeeeee transparent transparent;
}
.submenu { height: 143px; padding-top: 16px; background: #2c3338; }
.sub-item { display: block; height: 55px; padding-left: 20px; color: #b3b8bd; font-size: 25.6px; line-height: 55px; }
.sub-active { color: #fff; font-weight: 600; font-size: 26px; }
.badge { width: 36px; height: 36px; margin-left: 13px; border-radius: 18px; background: #cc3338; color: #fff; font-size: 24px; text-align: center; line-height: 36px; }
.woo-ico { position: relative; display: flex; align-items: center; justify-content: center; flex: none; width: 40px; height: 40px; margin-right: 16px; }
.woo-bg { width: 38px; height: 38px; fill: #9ca2a7; }
.woo-text { position: absolute; left: 6px; top: 4px; color: #1c2125; font: italic 700 15px/26px "Liberation Sans", sans-serif; letter-spacing: -.3px; }

.content { display: flex; flex: 1; min-width: 0; padding-left: 44px; }
.main-col { flex: none; width: 2807px; padding-top: 49px; }
.side-col { flex: none; width: 560px; margin-left: 40px; padding-top: 50px; }

/* title */
.title-input {
  display: block; width: 100%; height: 75px; padding: 0 0 0 9px;
  border: 2px solid #8c8f94; border-radius: 8px; background: #fff;
  color: #1d2327; font: 400 42px/1 Inter, "Liberation Sans", sans-serif;
}
.permalink { display: flex; align-items: center; height: 54px; margin-top: 16px; padding-left: 21px; font-size: 25.85px; line-height: 34px; }
.perma-label { color: #50575e; margin-right: 8px; }
.link { color: #2063a8; text-decoration: underline; }
.edit-btn {
  display: flex; align-items: center; justify-content: center;
  width: 78px; height: 54px; margin-left: 6px;
  border: 2px solid #2063a8; border-radius: 6px; background: #f6f7f7;
  color: #2063a8; font-size: 23px;
}
.mode-bar {
  display: flex; align-items: center; width: 555px; height: 88px; margin-top: 18px;
  padding-left: 23px; border-radius: 8px; background: #10679f;
}
.mode-logo { width: 32px; height: 25px; margin-right: 49px; fill: #fff; }
.mode-btn { color: #fff; font-size: 27.2px; font-weight: 500; }
.mode-classic { margin-right: 52px; }

/* builder */
.pb-box { margin-top: 40px; border: 2px solid #c3c4c7; background: #fff; }
.pb-head { display: flex; align-items: center; height: 74px; padding: 0 27px 0 24px; border-bottom: 2px solid #c3c4c7; }
.pb-title { flex: 1; color: #1d2327; font-size: 27.6px; font-weight: 600; }
.pb-chev { width: 28px; height: 16px; }
.pb-chev-down { margin-left: 24px; }
.pb-tri { width: 0; height: 0; margin-left: 42px; border-style: solid; border-width: 0 8px 12px; border-color: transparent transparent #5f6368; }
.pb-toolbar { display: flex; align-items: center; height: 114px; padding: 0 10px 3px 28px; background: #10679f; }
.tb-logo { width: 73px; height: 55px; margin-right: 67px; fill: #fff; }
.tb-plus { width: 44px; height: 44px; margin-right: 76px; fill: #fff; }
.tb-layout { width: 44px; height: 44px; }
.tb-spacer { flex: 1; }
.tb-undo, .tb-redo, .tb-full { width: 44px; height: 44px; margin-right: 76px; }
.tb-full { margin-right: 78px; }
.tb-gear-wrap { position: relative; display: flex; width: 71px; }
.tb-gear { width: 40px; height: 40px; }
.css-badge {
  position: absolute; left: 22px; top: -18px;
  width: 49px; height: 26px; border-radius: 6px; background: #fdb02c;
  color: #fff; font-size: 20px; line-height: 26px; text-align: center;
}

.pb-rows { padding: 28px 28px 0; }
.row { margin-bottom: 30px; }
.row-bar { display: flex; justify-content: space-between; height: 52px; }
.tabs { display: flex; gap: 2px; }
.tab { display: flex; align-items: center; justify-content: center; height: 52px; background: #e0e0e0; border-radius: 6px 6px 0 0; }
.tab-exp { width: 70px; }
.tab-burger { width: 76px; }
.tab-add { width: 80px; }
.tab-r { width: 80px; }
.burger { width: 58px; height: 24px; border-top: 4px solid #9a9a9a; border-bottom: 4px solid #9a9a9a; background: linear-gradient(#9a9a9a, #9a9a9a) center / 100% 4px no-repeat; }
.ic-exp { width: 27px; height: 27px; fill: #8a8a8a; color: #8a8a8a; flex: none; }
.ic-add { width: 28px; height: 28px; fill: #808080; flex: none; }
.ic-edit { width: 26px; height: 26px; fill: #808080; flex: none; }
.ic-copy { width: 28px; height: 26px; fill: none; color: #808080; flex: none; }
.ic-x { width: 24px; height: 26px; color: #808080; flex: none; }
.mini-tri { width: 0; height: 0; border-style: solid; border-width: 7px 7px 0; border-color: #808080 transparent transparent; }

.row-body { padding: 0 28px; background: #f2f2f2; }
.controls { display: flex; align-items: center; justify-content: center; gap: 14px; height: 50px; padding-bottom: 5px; }
.controls-in { flex: 1; gap: 4px; height: 28px; padding: 0; }
.controls-in .ic-x { width: 30px; height: 28px; }
.element { display: flex; padding: 22px 22px 24px; border-radius: 6px; background: #fff; }
.el-icon { flex: none; width: 64px; height: 64px; margin-right: 20px; }
.el-name { color: #32373c; font-size: 26px; font-weight: 600; line-height: 30px; margin-top: 1px; }
.el-desc { margin: 30px 0 28px; font-size: 25.4px; line-height: 30px; }
.el-glyph-text { fill: #fff; font: 700 12px "Liberation Serif", serif; }
.row-foot { display: flex; align-items: center; justify-content: center; height: 50px; }

.tabs-el { margin-top: 9px; padding-top: 6px; background: #fff; }
.tabs-el-head { display: flex; height: 40px; padding-left: 6px; }
.tabs-el-body { display: flex; padding: 0 18px 0 20px; }
.tabs-el-icon { margin: 24px 19px 0 0; }
.tabs-list { flex: 1; padding: 22px 0 0 22px; border: 2px dotted #d9d9d9; border-bottom: 0; }
.tab-item { display: flex; height: 118px; }

/* side boxes */
.postbox { margin-bottom: 42px; border: 2px solid #c3c4c7; background: #fff; }
.box-title { height: 74px; padding-left: 24px; border-bottom: 2px solid #c3c4c7; color: #1d2327; font-size: 27.6px; font-weight: 600; line-height: 70px; }
.pub-actions { height: 88px; padding: 23px 0 0 282px; }
.preview-btn { display: block; width: 250px; height: 54px; padding-left: 20px; border: 2px solid #2063a8; border-radius: 6px; color: #2063a8; background: #f6f7f7; white-space: nowrap; }
.misc-item { display: flex; align-items: center; height: 68px; white-space: nowrap; color: #3c434a; }
.misc-ico { flex: none; width: 34px; height: 34px; margin: 0 17px 0 20px; fill: #82878c; }
.misc-eye { height: 22px; }
.misc-edit { display: block; height: 36px; margin: -11px 0 15px 20px; width: 36px; }
.box-foot { display: flex; align-items: center; height: 103px; padding: 0 0 4px 20px; border-top: 2px solid #d5d6d8; background: #f6f7f7; }
.trash { color: #b32d2e; text-decoration: underline; }
.attr-body { padding: 0 24px 26px; }
.attr-label { margin-top: 28px; color: #3c434a; font-weight: 600; }
.attr-first { margin-top: 27px; }
.attr-order { margin-top: 29px; }
.select {
  display: flex; align-items: center; width: 300px; height: 58px; margin-top: 15px; padding-left: 17px;
  border: 2px solid #8c8f94; border-radius: 8px; background: #fff; white-space: nowrap; color: #32373c; font-size: 27px;
}
.select-wide { width: 510px; padding-left: 18px; }
.select-chev { flex: none; width: 20px; height: 12px; margin-left: 10px; }
.order-input {
  display: block; width: 108px; height: 58px; margin-top: 16px; padding: 0 0 0 17px;
  border: 2px solid #8c8f94; border-radius: 8px; background: #fff;
  color: #32373c; font: 400 26px Inter, "Liberation Sans", sans-serif;
}
.attr-help { margin: 27px 0 0; color: #50575e; line-height: 39px; }
.feat-body { padding: 27px 24px 50px; }

.statusbar {
  position: absolute; left: 0; bottom: 0; z-index: 6;
  width: 313px; height: 41px; padding-left: 7px;
  background: #dadde2; border-radius: 0 8px 0 0;
  color: #33373b; font-size: 24px; line-height: 40px; white-space: nowrap;
}
```
